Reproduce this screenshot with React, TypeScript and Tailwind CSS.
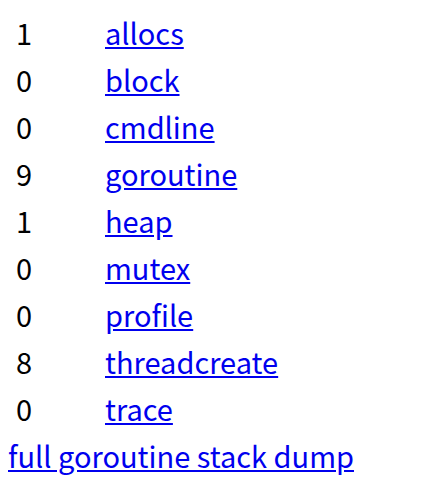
const rows: [number, string][] = [
  [1, 'allocs'],
  [0, 'block'],
  [0, 'cmdline'],
  [9, 'goroutine'],
  [1, 'heap'],
  [0, 'mutex'],
  [0, 'profile'],
  [8, 'threadcreate'],
  [0, 'trace'],
];

export default function App() {
  return (
    <div
      className="bg-white min-h-[502px] px-2 pt-[9px] text-[29px] leading-[47px] text-black"
      style={{ fontFamily: '"Noto Sans CJK KR", "Noto Sans", sans-serif' }}
    >
      {rows.map(([count, name]) => (
        <div key={name} className="flex h-[47px]">
          <div className="w-[97px] pl-[8px]">{count}</div>
          <a href={`#${name}`} className="text-[#0000ee] underline">
            {name}
          </a>
        </div>
      ))}
      <a href="#goroutine-debug" className="text-[#0000ee] underline">
        full goroutine stack dump
      </a>
    </div>
  );
}
